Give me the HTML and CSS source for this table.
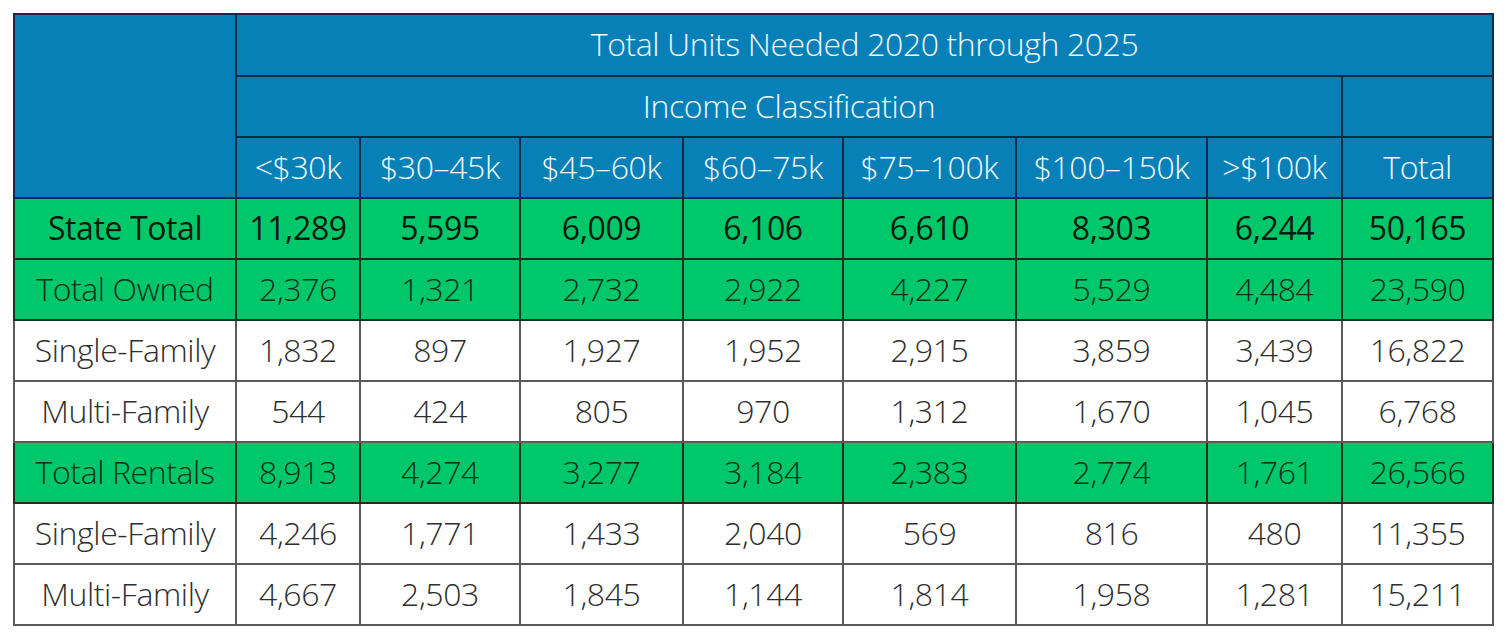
FILE: index.html
```html
<!DOCTYPE html>
<html>
<head>
<meta charset="utf-8">
<link rel="stylesheet" href="styles.css">
</head>
<body>
<table class="units">
  <colgroup>
    <col class="c-label"><col class="c1"><col class="c2"><col class="c3"><col class="c4"><col class="c5"><col class="c6"><col class="c7"><col class="c8">
  </colgroup>
  <thead>
    <tr class="h">
      <th rowspan="3" class="corner"></th>
      <th colspan="8">Total Units Needed 2020 through 2025</th>
    </tr>
    <tr class="h">
      <th colspan="7">Income Classification</th>
      <th class="blank"></th>
    </tr>
    <tr class="h">
      <th>&lt;$30k</th><th>$30–45k</th><th>$45–60k</th><th>$60–75k</th><th>$75–100k</th><th>$100–150k</th><th>&gt;$100k</th><th>Total</th>
    </tr>
  </thead>
  <tbody>
    <tr class="green bold"><td>State Total</td><td>11,289</td><td>5,595</td><td>6,009</td><td>6,106</td><td>6,610</td><td>8,303</td><td>6,244</td><td>50,165</td></tr>
    <tr class="green"><td>Total Owned</td><td>2,376</td><td>1,321</td><td>2,732</td><td>2,922</td><td>4,227</td><td>5,529</td><td>4,484</td><td>23,590</td></tr>
    <tr class="white"><td>Single-Family</td><td>1,832</td><td>897</td><td>1,927</td><td>1,952</td><td>2,915</td><td>3,859</td><td>3,439</td><td>16,822</td></tr>
    <tr class="white"><td>Multi-Family</td><td>544</td><td>424</td><td>805</td><td>970</td><td>1,312</td><td>1,670</td><td>1,045</td><td>6,768</td></tr>
    <tr class="green"><td>Total Rentals</td><td>8,913</td><td>4,274</td><td>3,277</td><td>3,184</td><td>2,383</td><td>2,774</td><td>1,761</td><td>26,566</td></tr>
    <tr class="white"><td>Single-Family</td><td>4,246</td><td>1,771</td><td>1,433</td><td>2,040</td><td>569</td><td>816</td><td>480</td><td>11,355</td></tr>
    <tr class="white"><td>Multi-Family</td><td>4,667</td><td>2,503</td><td>1,845</td><td>1,144</td><td>1,814</td><td>1,958</td><td>1,281</td><td>15,211</td></tr>
  </tbody>
</table>
</body>
</html>
```
FILE: styles.css
```css
html, body {
  margin: 0;
  background: #ffffff;
}
body {
  padding: 13px 0 0 13px;
  font-family: "Open Sans", "Noto Sans", sans-serif;
}
.units {
  border-collapse: collapse;
  table-layout: fixed;
  width: 1480px;
  font-size: 32px;
  font-weight: 300;
  letter-spacing: -0.4px;
}
.c-label { width: 222px; }
.c1 { width: 124px; }
.c2 { width: 160px; }
.c3 { width: 163px; }
.c4 { width: 160px; }
.c5 { width: 173px; }
.c6 { width: 191px; }
.c7 { width: 135px; }
.c8 { width: 151px; }

.units th, .units td {
  padding: 0 0 2px 0;
  text-align: center;
  height: 57px;
  line-height: 1;
  white-space: nowrap;
}
.units th {
  background: #0780b8;
  color: #f2f8fc;
  font-weight: 300;
  border: 2px solid #0c2c48;
}
.units tr.h:first-child th { height: 58px; }
.green td {
  background: #00c86a;
  color: #06301a;
  border: 2px solid #153322;
}
.bold td {
  font-weight: 500;
  color: #061a10;
}
.white td {
  background: #ffffff;
  color: #2e2e2e;
  border: 2px solid #5a5a5a;
}
```
